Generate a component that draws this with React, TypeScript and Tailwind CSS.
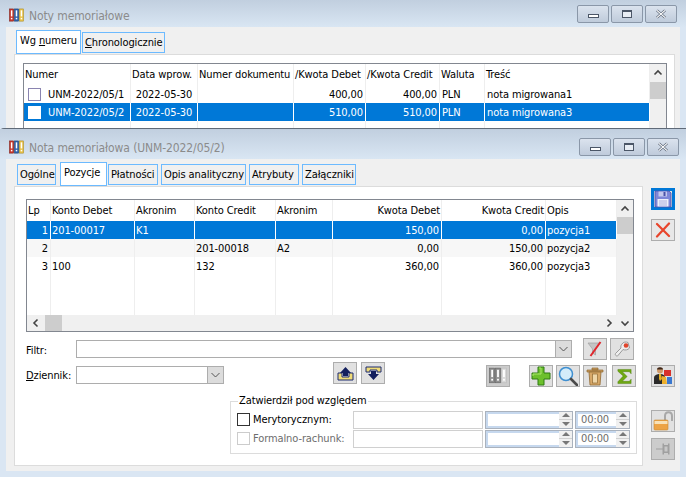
import React from 'react';

const font = "font-['DejaVu_Sans',sans-serif] [font-stretch:condensed] text-[11px] leading-[16px] tracking-[-0.1px]";

const Binders = ({ grey = false, size = 15, className = '' }: { grey?: boolean; size?: number; className?: string }) => (
  <svg width={size} height={size} viewBox="0 0 16 16" className={className}>
    <rect x="0.5" y="1" width="4.5" height="13" fill={grey ? '#8f8f8f' : '#c9372c'} stroke={grey ? '#666' : '#7d1f18'} strokeWidth="0.6" />
    <rect x="5.8" y="1" width="4.5" height="13" fill={grey ? '#8f8f8f' : '#2f63ad'} stroke={grey ? '#666' : '#1c3d70'} strokeWidth="0.6" />
    <rect x="11" y="1" width="4.5" height="13" fill={grey ? '#d8d8d8' : '#e8c24a'} stroke={grey ? '#bbb' : '#a88a22'} strokeWidth="0.6" />
    <rect x="2" y="2.5" width="1.6" height="6.5" fill="#fff" />
    <rect x="7.2" y="2.5" width="1.6" height="6.5" fill="#fff" />
    <rect x="12.5" y="2.5" width="1.6" height="6.5" fill="#fff" />
    <rect x="2" y="10.5" width="1.6" height="1.6" fill="#fff" />
    <rect x="7.2" y="10.5" width="1.6" height="1.6" fill="#fff" />
    <rect x="12.5" y="10.5" width="1.6" height="1.6" fill="#fff" />
  </svg>
);

const Save = () => (
  <svg width="18" height="18" viewBox="0 0 18 18">
    <path d="M1 1h14l2 2v14H1z" fill="#7d86d8" stroke="#4a52a8" strokeWidth="0.8" />
    <rect x="4.5" y="1.5" width="8.5" height="5" fill="#c4c8ee" />
    <rect x="9.5" y="2" width="2" height="4" fill="#4a52a8" />
    <rect x="3.5" y="9" width="11" height="7.5" fill="#eef0fa" />
    <path d="M5 11h8M5 13h8M5 15h8" stroke="#9aa0d8" strokeWidth="0.8" />
  </svg>
);

const RedX = () => (
  <svg width="16" height="16" viewBox="0 0 16 16">
    <path d="M2 2l12 12M14 1.5L2 14.5" stroke="#e8452c" strokeWidth="2.2" strokeLinecap="round" />
  </svg>
);

const FilterOff = () => (
  <svg width="16" height="16" viewBox="0 0 16 16">
    <path d="M1 2h12L8.500 8v6l-3-2V8z" fill="#c4c4c4" stroke="#a0a0a0" strokeWidth="0.7" />
    <path d="M13.500 1L3.500 15" stroke="#e0262c" strokeWidth="2" />
  </svg>
);

const Wrench = () => (
  <svg width="17" height="17" viewBox="0 0 17 17">
    <path d="M8 3c1-2 4-2.500 6-1.500L15.500 7c-1.500 2-4.500 2.500-6.500 1.500L4 14.500c-1 1.500-3.500-.5-2.500-2L7 7C6.500 5.500 7 4 8 3" fill="#eeeeee" stroke="#9a9a9a" strokeWidth="1" />
    <circle cx="12" cy="4.500" r="2.300" fill="#e0452c" />
  </svg>
);

const ArrowUp = () => (
  <svg width="17" height="15" viewBox="0 0 17 15">
    <path d="M1 7h4v4h7V7h4v7H1z" fill="#f0dc78" stroke="#1d2a70" strokeWidth="1" />
    <path d="M8.500 1L14 7h-3v3H6V7H3z" fill="#14205e" />
  </svg>
);

const ArrowDown = () => (
  <svg width="17" height="15" viewBox="0 0 17 15">
    <path d="M1 1h15v5h-4V4H5v2H1z" fill="#f0dc78" stroke="#1d2a70" strokeWidth="1" />
    <path d="M8.500 14L3 8h3V5h5v3h3z" fill="#14205e" />
  </svg>
);

const Plus = () => (
  <svg width="20" height="20" viewBox="0 0 20 20">
    <path d="M7 1h6v6h6v6h-6v6H7v-6H1V7h6z" fill="#6cc02c" stroke="#2f7a12" strokeWidth="1" />
    <path d="M8 2h2v6H2v2" fill="none" stroke="#a8e46a" strokeWidth="1" />
  </svg>
);

const Magnifier = () => (
  <svg width="20" height="20" viewBox="0 0 20 20">
    <circle cx="8" cy="8" r="6.500" fill="#d4ecfa" stroke="#3f8fd0" strokeWidth="1.500" />
    <path d="M13 13l6 6" stroke="#4a4a4a" strokeWidth="2.600" strokeLinecap="round" />
  </svg>
);

const Trash = () => (
  <svg width="18" height="20" viewBox="0 0 18 20">
    <path d="M6 2h6v2H6zM1 4h16v2H1z" fill="#c89a5c" stroke="#8f6a34" strokeWidth="0.7" />
    <path d="M3 6h12l-1 13H4z" fill="#d8a868" stroke="#8f6a34" strokeWidth="0.8" />
    <rect x="6.500" y="8" width="5" height="9" fill="#efd6a8" stroke="#8f6a34" strokeWidth="0.7" />
  </svg>
);

const Sigma = () => (
  <svg width="15" height="17" viewBox="0 0 17 18">
    <path d="M1 1h15v5l-2-2.500H6l5.500 5.500L6 14.500h8l2-2.500v5H1v-2l6-6.500L1 3z" fill="#6ea812" stroke="#4a7c0a" strokeWidth="0.5" />
  </svg>
);

const Users = () => (
  <svg width="20" height="20" viewBox="0 0 20 20">
    <circle cx="7" cy="4.500" r="3" fill="#d09a6a" />
    <path d="M4 3.500c0-3 6-3 6 0z" fill="#3a2418" />
    <path d="M1 18v-6c0-3 3-4 6-4s5 1 5 4v6z" fill="#2a2a2a" />
    <path d="M6 8h2l1 5-2 2-1-2z" fill="#e8b020" />
    <rect x="11" y="4" width="7" height="6" fill="#d8322c" />
    <path d="M9 10l4 1 1 7H9z" fill="#eeb02c" />
    <path d="M14 11h5v7h-5z" fill="#3a78d0" />
  </svg>
);

const Lock = () => (
  <svg width="20" height="20" viewBox="0 0 20 20">
    <path d="M12 9V5c0-5 7-5 7 0v5" fill="none" stroke="#a8a8a8" strokeWidth="2" />
    <rect x="1" y="9" width="14" height="10" rx="1" fill="#eda446" stroke="#c88a38" strokeWidth="0.6" />
    <rect x="1.500" y="10" width="13" height="3" fill="#f8e2b8" />
  </svg>
);

const Pin = () => (
  <svg width="16" height="16" viewBox="0 0 16 16">
    <path d="M1 8h7" stroke="#a0a0a0" strokeWidth="1" />
    <path d="M7.500 2.500h1.500v11H7.500zM13 2.500h1.500v11H13zM9 4h4v8H9z" fill="#a0a0a0" />
    <path d="M9.500 5.500h3v5h-3z" fill="#c8c8c8" />
  </svg>
);

const Caption = ({ children }: { children: React.ReactNode }) => (
  <div className="w-[32px] h-[18px] rounded-[2px] border border-[#8a97a8] bg-gradient-to-b from-[#dbe3ee] to-[#bfcbdb] flex items-center justify-center">
    {children}
  </div>
);

const CaptionButtons = () => (
  <div className="flex gap-[2px]">
    <Caption>
      <div className="w-[11px] h-[4px] mt-[4px] border border-[#4b5667] bg-white" />
    </Caption>
    <Caption>
      <div className="w-[10px] h-[8px] border border-t-2 border-[#4b5667] bg-[#e8edf4]" />
    </Caption>
    <Caption>
      <svg width="12" height="10" viewBox="0 0 13 11">
        <path d="M2 1.500l9 8M11 1.500l-9 8" stroke="#5b6677" strokeWidth="2.800" />
        <path d="M2 1.500l9 8M11 1.500l-9 8" stroke="#fff" strokeWidth="1.300" />
      </svg>
    </Caption>
  </div>
);

const tabBase = 'border border-[#6cbaff] flex whitespace-nowrap shrink-0 ';

const BackTab = ({ w, active = false, children }: { w: string; active?: boolean; children: React.ReactNode }) => (
  <div className={tabBase + w + (active ? ' bg-white h-[24px] pl-[3px] pt-[2px]' : ' bg-[#f0f0f0] h-[21px] mt-[2px] pl-[2px] pt-[1px] items-center')}>
    {children}
  </div>
);

const noteTabs = [
  { label: 'Ogólne', cls: 'w-[39px] ml-[3px]' },
  { label: 'Pozycje', cls: 'w-[47px] ml-[4px]', active: true },
  { label: 'Płatności', cls: 'w-[50px] ml-[1px]' },
  { label: 'Opis analityczny', cls: 'w-[85px] ml-[3px]' },
  { label: 'Atrybuty', cls: 'w-[50px] ml-[3px]' },
  { label: 'Załączniki', cls: 'w-[54px] ml-[3px]' },
];

const IconButton = ({ children, disabled = false, focused = false, className = '' }: { children: React.ReactNode; disabled?: boolean; focused?: boolean; className?: string }) => (
  <div
    className={
      'flex items-center justify-center shrink-0 w-[24px] h-[22px] ' +
      (focused ? 'border-[3px] border-[#0078d7] bg-[#e1e1e1] ' : 'border border-[#adadad] ') +
      (disabled ? 'bg-[#cccccc] ' : 'bg-[#e1e1e1] ') +
      className
    }
  >
    {children}
  </div>
);

const Chevron = ({ dir, color = '#444' }: { dir: 'up' | 'down' | 'left' | 'right'; color?: string }) => {
  const d = {
    up: 'M1.500 6.500L5 3l3.500 3.500',
    down: 'M1.500 3.500L5 7l3.500-3.500',
    left: 'M6.500 1.500L3 5l3.500 3.500',
    right: 'M3.500 1.500L7 5 3.500 8.500',
  }[dir];
  return (
    <svg width="10" height="10" viewBox="0 0 10 10">
      <path d={d} fill="none" stroke={color} strokeWidth="1.600" />
    </svg>
  );
};

const ComboArrow = () => (
  <div className="w-[16px] h-full bg-[#dcdcdc] border-l border-[#adadad] flex items-center justify-center shrink-0">
    <svg width="9" height="6" viewBox="0 0 9 6">
      <path d="M.5 1L4.500 5l4-4" fill="none" stroke="#555" strokeWidth="1" />
    </svg>
  </div>
);

const Spinner = () => (
  <div className="w-[13px] h-full flex flex-col shrink-0 ml-auto bg-[#f0f0f0]">
    <div className="flex-1 flex items-center justify-center border-b border-[#d0d0d0]">
      <div className="w-0 h-0 border-x-[4px] border-x-transparent border-b-[4px] border-b-[#777]" />
    </div>
    <div className="flex-1 flex items-center justify-center">
      <div className="w-0 h-0 border-x-[4px] border-x-transparent border-t-[4px] border-t-[#777]" />
    </div>
  </div>
);

const topCols = [
  { w: 'w-[107px]', title: 'Numer', cells: ['UNM-2022/05/1', 'UNM-2022/05/2'], check: true },
  { w: 'w-[67px]', title: 'Data wprow.', cells: ['2022-05-30', '2022-05-30'], center: true },
  { w: 'w-[96px]', title: 'Numer dokumentu', cells: ['', ''] },
  { w: 'w-[72px]', title: '/Kwota Debet', cells: ['400,00', '510,00'], right: true },
  { w: 'w-[74px]', title: '/Kwota Credit', cells: ['400,00', '510,00'], right: true },
  { w: 'w-[45px]', title: 'Waluta', cells: ['PLN', 'PLN'] },
  { w: 'w-[165px]', title: 'Treść', cells: ['nota migrowana1', 'nota migrowana3'], last: true },
];

const gridCols = [
  { w: 'w-[24px]', title: 'Lp', cells: ['1', '2', '3'], right: true },
  { w: 'w-[84px]', title: 'Konto Debet', cells: ['201-00017', '', '100'] },
  { w: 'w-[60px]', title: 'Akronim', cells: ['K1', '', ''] },
  { w: 'w-[81px]', title: 'Konto Credit', cells: ['', '201-00018', '132'] },
  { w: 'w-[57px]', title: 'Akronim', cells: ['', 'A2', ''] },
  { w: 'w-[109px]', title: 'Kwota Debet', cells: ['150,00', '0,00', '360,00'], right: true, headRight: true },
  { w: 'w-[104px]', title: 'Kwota Credit', cells: ['0,00', '150,00', '360,00'], right: true, headRight: true },
  { w: 'w-[71px]', title: 'Opis', cells: ['pozycja1', 'pozycja2', 'pozycja3'], last: true },
];

const VScrollTrack = ({ thumbTop }: { thumbTop: string }) => (
  <div className="w-[16px] shrink-0 bg-[#f0f0f0] flex flex-col">
    <div className="h-[17px] flex items-center justify-center shrink-0">
      <Chevron dir="up" />
    </div>
    <div className={'h-[17px] bg-[#cdcdcd] shrink-0 ' + thumbTop} />
  </div>
);

const TopList = () => (
  <div className="mt-[8px] ml-[8px] w-[644px] h-[90px] border border-[#828790] bg-white flex">
    {topCols.map((c) => (
      <div key={c.title} className={c.w + ' shrink-0 flex flex-col'}>
        <div className="h-[21px] pl-[1px] flex items-center border-r border-[#eeeeee] whitespace-nowrap">{c.title}</div>
        {c.cells.map((v, i) => (
          <div
            key={i}
            className={
              'h-[18px] flex items-center whitespace-nowrap px-[2px] pt-[1px] ' +
              (i === 1 ? 'bg-[#0078d7] text-white border-r border-white ' : 'border-r border-[#eeeeee] ') +
              (c.right ? 'justify-end ' : '') +
              (c.center ? 'justify-center ' : '')
            }
          >
            {c.check && (
              <span className={'w-[13px] h-[13px] ml-[2px] mr-[7px] bg-white shrink-0 border ' + (i === 1 ? 'border-white' : 'border-[#8a84b0]')} />
            )}
            {v}
          </div>
        ))}
        <div className="flex-1 border-r border-[#eeeeee]" />
      </div>
    ))}
    <VScrollTrack thumbTop="mt-[1px]" />
  </div>
);

const PositionsGrid = () => (
  <div className="w-[608px] h-[133px] border border-[#828790] bg-white flex flex-col">
    <div className="flex flex-1 min-h-0">
      {gridCols.map((c, n) => (
        <div key={n} className={c.w + ' shrink-0 flex flex-col'}>
          <div className={'h-[21px] px-[1px] flex items-center border-r border-[#eeeeee] whitespace-nowrap ' + (c.headRight ? 'justify-end' : '')}>{c.title}</div>
          {c.cells.map((v, i) => (
            <div
              key={i}
              className={
                'h-[18px] px-[1px] pt-[1px] flex items-center whitespace-nowrap ' +
                (i === 0 ? 'bg-[#0078d7] text-white border-r border-white ' : i === 1 ? 'bg-[#f7f7f7] border-r border-[#eeeeee] ' : 'border-r border-[#eeeeee] ') +
                (c.right ? 'justify-end pr-[2px]' : '')
              }
            >
              {v}
            </div>
          ))}
          <div className="flex-1 border-r border-[#eeeeee]" />
        </div>
      ))}
      <VScrollTrack thumbTop="mt-[0px]" />
    </div>
    <div className="h-[16px] bg-[#f0f0f0] flex shrink-0 items-center">
      <div className="w-[18px] flex justify-center"><Chevron dir="left" /></div>
      <div className="w-[17px] h-full bg-[#cdcdcd]" />
      <div className="flex-1 flex justify-end pr-[3px]"><Chevron dir="right" /></div>
      <div className="w-[16px] flex justify-center"><Chevron dir="down" /></div>
    </div>
  </div>
);

const ApprovalRow = ({ label, off = false }: { label: string; off?: boolean }) => (
  <div className="flex items-center h-[19px]">
    <span className={'w-[13px] h-[13px] shrink-0 border bg-white ' + (off ? 'border-[#cccccc]' : 'border-[#333333]')} />
    <span className={'ml-[3px] w-[100px] whitespace-nowrap ' + (off ? 'text-[#6d6d6d]' : '')}>{label}</span>
    <div className="w-[130px] h-[18px] border border-[#d0d0d0] bg-white shrink-0" />
    <div className="w-[88px] h-[18px] ml-[2px] border border-[#aab2bd] bg-white flex shrink-0">
      <div className="flex-1 border-2 border-r-0 border-[#c6d8ee]" />
      <Spinner />
    </div>
    <div className="w-[55px] h-[18px] ml-[2px] border border-[#aab2bd] bg-white flex items-center text-[#6d6d6d] shrink-0">
      <div className="flex-1 h-full pl-[3px] flex items-center border-2 border-r-0 border-[#c6d8ee]">00:00</div>
      <Spinner />
    </div>
  </div>
);

const App = () => (
  <div className={'relative w-[686px] h-[477px] overflow-hidden bg-[#dae6f3] text-black ' + font}>
    {/* okno listy */}
    <div className="absolute left-0 top-0 w-[686px] h-[130px] flex flex-col">
      <div className="h-[27px] shrink-0 bg-gradient-to-b from-[#c1cfdf] to-[#d9e6f3] flex items-center pl-[9px] pr-[9px]">
        <Binders className="mt-[3px]" />
        <span className="ml-[5px] mt-[4px] text-[#8b8b8b] text-[12px]">Noty memoriałowe</span>
        <div className="ml-auto"><CaptionButtons /></div>
      </div>
      <div className="mx-[6px] flex-1 bg-[#f0f0f0] pl-[8px] pt-[3px] min-h-0">
        <div className="flex pl-[2px] h-[24px]">
          <BackTab w="w-[65px]" active><span>Wg <u>n</u>umeru</span></BackTab>
          <BackTab w="w-[83px] ml-[1px]"><span><u>C</u>hronologicznie</span></BackTab>
        </div>
        <div className="w-[661px] h-[120px] bg-white border border-[#dcdcdc]">
          <TopList />
        </div>
      </div>
    </div>

    {/* okno noty */}
    <div className="absolute left-0 top-[128px] w-[686px] h-[349px] flex flex-col border-t border-[#5f6a78] rounded-tl-[4px] bg-[#dae6f3]">
      <div className="h-[30px] shrink-0 bg-gradient-to-b from-[#c1cfdf] to-[#d9e6f3] flex items-start pt-[9px] pl-[9px] pr-[7px]">
        <Binders className="mt-[2px]" />
        <span className="ml-[5px] mt-[2px] text-[#8b8b8b] text-[12px]">Nota memoriałowa (UNM-2022/05/2)</span>
        <div className="ml-auto"><CaptionButtons /></div>
      </div>
      <div className="mx-[6px] h-[312px] bg-[#f0f0f0] pl-[8px] pt-[3px] flex">
        <div className="w-[629px] shrink-0">
          <div className="flex h-[24px]">
            {noteTabs.map((t) => (
              <BackTab key={t.label} w={t.cls} active={t.active}>{t.label}</BackTab>
            ))}
          </div>
          <div className="h-[280px] bg-white border border-[#dcdcdc] pl-[11px] pt-[12px]">
            <PositionsGrid />
            <div className="flex items-center mt-[8px] h-[18px]">
              <span className="w-[50px] pt-[3px]">Filtr:</span>
              <div className="w-[496px] h-[18px] border border-[#adadad] bg-white flex justify-end">
                <ComboArrow />
              </div>
              <IconButton className="ml-[11px] h-[19px]"><FilterOff /></IconButton>
              <IconButton className="ml-[3px] h-[19px]"><Wrench /></IconButton>
            </div>
            <div className="flex items-start mt-[4px] h-[25px]">
              <span className="w-[50px] mt-[6px]"><u>D</u>ziennik:</span>
              <div className="w-[148px] h-[18px] mt-[4px] border border-[#adadad] bg-white flex justify-end">
                <ComboArrow />
              </div>
              <IconButton className="ml-[109px]"><ArrowUp /></IconButton>
              <IconButton className="ml-[4px]"><ArrowDown /></IconButton>
              <IconButton disabled className="ml-[101px] mt-[3px]"><Binders grey size={18} /></IconButton>
              <IconButton className="ml-[19px] mt-[3px]"><Plus /></IconButton>
              <IconButton className="ml-[3px] mt-[3px]"><Magnifier /></IconButton>
              <IconButton className="ml-[3px] mt-[3px]"><Trash /></IconButton>
              <IconButton className="ml-[5px] mt-[3px]"><Sigma /></IconButton>
            </div>
            <fieldset className="ml-[204px] mt-[7px] w-[407px] h-[60px] border border-[#dcdcdc] pl-[6px] pt-[2px]">
              <legend className="ml-[1px] px-[1px] leading-[14px]">Zatwierdził pod względem</legend>
              <ApprovalRow label="Merytorycznym:" />
              <ApprovalRow label="Formalno-rachunk:" off />
            </fieldset>
          </div>
        </div>
        <div className="ml-[8px] flex flex-col mt-[26px]">
          <IconButton focused><Save /></IconButton>
          <IconButton className="mt-[9px] bg-[#e8e8e8]"><RedX /></IconButton>
          <IconButton className="mt-[124px]"><Users /></IconButton>
          <IconButton className="mt-[23px]"><Lock /></IconButton>
          <IconButton disabled className="mt-[6px]"><Pin /></IconButton>
        </div>
      </div>
    </div>
  </div>
);

export default App;
